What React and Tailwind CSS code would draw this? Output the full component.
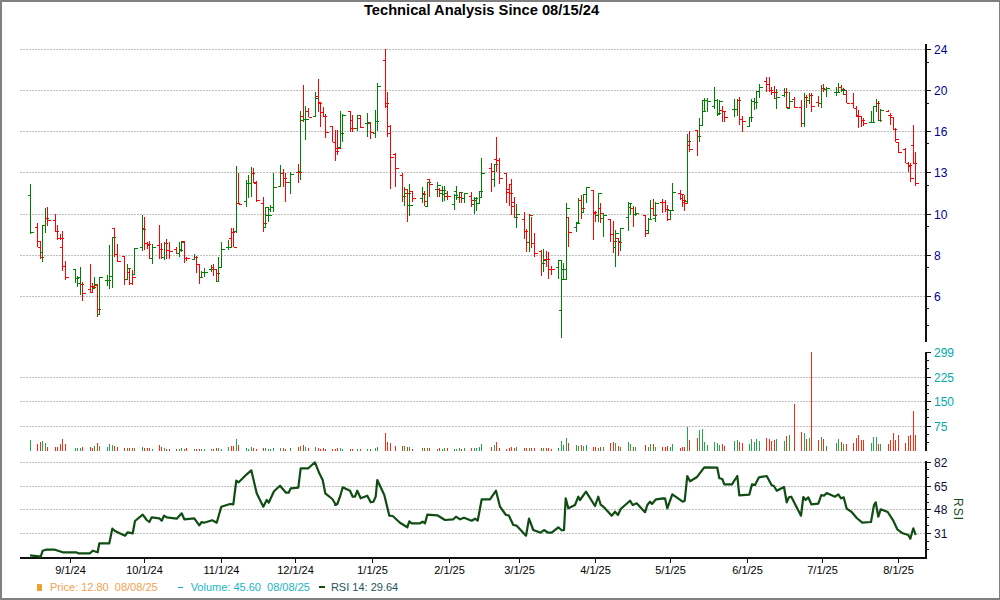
const SECTIONS = [
  { xo: 0, yo: 170, vo: 430, rows: [
    [91,43,193,75,187,'g',30],
    [113,160,230,172,230,'r',42],[121,214,268,214,262,'r',36],[128,165,275,247,165,'g',32],[136,115,190,165,145,'g',40],[143,110,167,145,150,'r',52],
    [165,133,182,150,182,'r',52],[172,165,210,182,203,'r',50],[180,193,210,203,205,'r',42],[187,182,303,230,289,'r',27],[195,272,330,289,322,'r',42],
    [225,296,340,298,324,'g',55],[232,318,352,324,340,'g',55],[240,290,375,322,342,'g',53],[247,335,392,342,370,'r',52],
    [270,281,367,358,347,'r',52],[277,338,367,365,350,'r',53],[284,320,357,355,342,'g',47],[292,342,440,345,418,'r',40],[299,322,431,431,322,'g',47],
    [322,315,348,330,330,'g',52],[329,225,357,330,318,'g',42],[337,200,354,318,202,'g',45],[344,175,260,175,252,'r',48],[351,222,275,252,274,'r',52],
    [374,258,344,258,328,'r',55],[381,283,330,328,295,'g',55],[389,295,345,307,340,'r',55],[396,300,344,340,322,'r',53],[403,233,312,312,233,'g',53],
    [426,135,242,232,178,'g',52],[433,142,240,175,218,'r',53],[441,215,238,218,222,'r',55],[448,212,268,225,265,'r',55],[456,222,282,265,230,'g',56],
    [478,166,268,226,238,'r',45],[485,220,268,238,262,'r',52],[493,215,270,262,218,'g',54],[500,207,268,218,240,'r',57],[508,215,268,240,243,'r',57],
    [530,232,252,238,248,'r',57],[537,215,260,248,240,'g',57],[545,212,245,238,215,'g',55],[552,213,278,213,265,'r',57],[560,262,272,265,265,'r',55],
    [582,253,270,268,262,'g',57],[589,258,310,262,283,'r',57],[597,283,342,283,322,'r',56],[604,303,323,322,305,'g',57],[612,295,322,307,307,'g',57],
    [634,285,305,298,298,'g',56],[641,282,318,290,298,'r',56],[649,298,332,298,310,'r',53],[656,262,332,332,290,'g',55],[664,215,290,290,238,'g',57],
    [686,210,240,230,230,'g',52],[693,175,230,205,186,'r',47],[701,175,232,187,230,'r',47],[709,-12,188,183,98,'g',28],[716,10,103,98,103,'r',45],
    [738,30,110,94,38,'g',55],[745,15,85,38,38,'g',56],[753,-8,82,38,10,'g',52],[760,-6,38,10,38,'r',54],[768,33,97,35,90,'r',56],
    [790,80,187,100,160,'r',55],[797,110,172,172,112,'g',53],[805,110,157,135,135,'g',57],[812,105,125,118,110,'g',57],[820,10,125,110,52,'g',55],
    [842,-15,52,48,8,'g',54],[850,-2,52,8,25,'r',53],[857,10,95,25,37,'r',57],[872,5,72,37,12,'g',54],
  ]},
  { xo: 0, yo: 0, vo: 430, rows: [
    [894,492,548,515,515,'r',52],[901,334,540,514,361,'g',47],[909,255,365,347,356,'r',45],[916,317,420,356,356,'g',50],[924,325,350,332,350,'r',53],
    [946,277,350,347,295,'g',52],[954,238,335,287,308,'r',55],[961,307,380,307,335,'r',56],[969,322,350,335,347,'r',55],[976,342,413,347,397,'r',57],
  ]},
  { xo: 330, yo: 40, vo: 430, rows: [
    [8,259,305,259,305,'r',56],[16,270,362,305,332,'r',56],[23,270,345,325,325,'r',54],[31,213,320,320,278,'g',55],[38,222,305,278,226,'g',57],
    [60,213,277,214,265,'r',57],[68,225,277,240,265,'r',57],[83,226,272,265,226,'g',57],[90,226,265,235,260,'r',57],
    [113,220,292,250,245,'g',57],[120,250,298,250,277,'r',57],[135,210,293,280,243,'g',55],[143,130,272,243,139,'g',50],
    [165,28,203,60,188,'r',10],[172,157,290,197,257,'r',37],[180,256,448,280,352,'r',40],[195,340,440,342,385,'r',48],
    [217,400,485,406,468,'r',48],[224,442,497,468,460,'g',48],[232,448,545,448,460,'r',50],[239,433,527,495,495,'g',52],[247,452,485,452,475,'r',57],
    [276,440,490,475,462,'g',54],[284,452,498,460,484,'r',54],[291,425,500,498,425,'g',55],[299,418,470,418,433,'r',53],
    [321,427,470,447,436,'g',56],[328,445,470,447,450,'r',55],[336,437,485,460,450,'g',57],[343,438,482,462,460,'g',55],[351,452,480,467,468,'r',53],
    [373,462,510,493,465,'g',57],[380,438,480,453,470,'g',57],[388,455,490,470,455,'g',55],[395,455,488,470,473,'r',56],[403,460,490,475,460,'g',55],
    [425,455,500,468,480,'r',55],[433,470,522,492,475,'g',54],[440,470,513,480,488,'g',55],[448,452,490,488,453,'g',52],[455,355,470,470,400,'g',42],
    [485,370,455,385,393,'r',50],[492,372,440,418,373,'g',46],[500,292,395,358,360,'r',37],[507,355,433,360,415,'r',55],
    [530,400,490,400,457,'r',58],[537,432,497,448,458,'r',54],[544,418,525,433,485,'r',52],[552,470,535,497,530,'r',54],[559,493,563,532,522,'g',52],
    [582,515,598,538,572,'r',55],[589,568,635,572,605,'r',55],[597,523,635,605,525,'g',54],[604,532,625,525,610,'r',55],[612,580,652,610,640,'r',54],
    [634,630,707,632,668,'r',55],[641,627,695,668,660,'g',54],[649,632,682,658,658,'r',54],[656,635,718,658,686,'r',55],[664,678,705,686,686,'r',57],
    [686,660,716,680,660,'g',55],[694,660,893,810,688,'g',33],[701,670,720,718,688,'g',45],[708,488,718,718,505,'g',25],[716,530,620,532,575,'r',39],
    [738,548,575,560,548,'g',45],[745,475,550,547,480,'g',47],[753,465,538,480,505,'r',44],[760,462,517,515,463,'g',47],[768,442,488,463,442,'g',44],
    [790,450,600,450,517,'r',50],[797,512,545,520,525,'r',50],[805,458,545,525,460,'g',53],[812,490,550,505,518,'r',50],[820,520,590,535,525,'g',50],
    [842,538,605,538,582,'r',40],[850,543,638,582,602,'r',36],[857,570,680,620,578,'g',38],[865,595,647,595,605,'r',47],[872,565,632,602,565,'g',52],
    [894,487,572,532,490,'g',36],[902,490,525,500,503,'g',43],[909,497,560,503,522,'r',50],[916,502,527,522,520,'g',50],
    [946,525,590,525,578,'r',45],[954,535,582,570,538,'g',50],[961,480,538,538,505,'g',43],[969,478,528,505,525,'r',43],[976,487,547,535,490,'g',50],
    [998,478,520,485,485,'r',52],[1006,480,515,485,508,'r',52],[1013,495,542,508,538,'r',48],
  ]},
  { xo: 660, yo: 40, vo: 340, rows: [
    [30,510,540,510,510,'g',322],[37,430,510,510,457,'g',312],
    [60,450,480,460,463,'r',323],[67,463,500,475,480,'r',322],[74,465,512,487,490,'r',322],[82,283,490,483,303,'g',262],[89,273,335,315,326,'r',300],
    [112,270,347,270,288,'r',294],[119,235,307,288,256,'g',270],[127,180,255,255,212,'g',267],[134,175,213,180,180,'g',307],[142,175,215,180,182,'g',315],
    [164,142,207,197,180,'g',306],[171,178,228,180,220,'g',310],[179,180,225,222,182,'g',315],[186,197,245,210,213,'r',313],[194,212,245,213,232,'r',319],
    [223,178,230,207,207,'g',303],[231,178,228,207,180,'g',300],[238,170,255,180,238,'r',305],[246,228,275,238,244,'r',309],
    [268,233,258,258,232,'g',312],[275,178,245,232,182,'g',297],[283,175,210,182,185,'g',306],[290,153,208,185,153,'g',297],[298,133,175,153,142,'g',303],
    [320,112,155,123,132,'r',294],[327,112,155,132,150,'r',297],[335,140,165,150,157,'r',302],[343,138,173,155,157,'r',300],[350,147,207,175,170,'g',297],
    [372,145,170,165,155,'g',303],[380,143,205,155,200,'r',288],[387,157,207,205,182,'g',285],[402,172,205,178,200,'r',192],
    [424,180,260,202,250,'r',277],[432,160,260,250,170,'g',280],[439,165,205,170,180,'r',297],[447,158,192,180,165,'g',295],[454,160,215,165,197,'r',36],
    [476,168,200,187,190,'r',300],[484,135,203,190,145,'g',292],[491,132,157,145,148,'r',298],[499,142,170,148,143,'g',318],
    [528,142,168,155,155,'g',309],[536,130,160,155,140,'g',297],[543,135,155,140,147,'r',306],[551,145,165,150,150,'g',311],[558,150,190,162,188,'r',312],
    [580,160,205,188,203,'r',309],[588,197,232,203,228,'r',295],[595,210,263,225,228,'r',285],[603,232,260,228,240,'r',300],[610,235,258,240,250,'r',301],
    [633,213,247,247,247,'g',309],[640,197,247,247,197,'g',291],[648,178,215,197,190,'g',291],[655,183,242,190,240,'r',312],[662,208,245,240,210,'g',312],
    [685,210,215,212,225,'r',312],[692,218,255,225,232,'r',300],[700,230,268,232,268,'r',280],[707,265,305,268,298,'r',300],[715,305,340,305,337,'r',285],
    [737,325,370,327,370,'r',309],[744,367,395,370,375,'r',288],[752,368,425,378,414,'r',286],[759,256,370,315,370,'r',213],[767,335,437,370,430,'r',285],
  ]},
];

const BARS = SECTIONS.flatMap(({ xo, yo, vo, rows }) =>
  rows.map(([x, h, l, o, c, col, v]) => ({
    x: Math.floor(xo + x / 3) + 0.5,
    h: yo + h / 3,
    l: yo + l / 3,
    o: Math.round(yo + o / 3) + 0.5,
    c: Math.round(yo + c / 3) + 0.5,
    col,
    v: vo + v / 3,
  }))
);

const rsi5 = [[90,376],[122,380],[128,362],[138,359],[165,359],[188,367],[228,367],[235,370],[270,370],[278,362],[293,367],[298,340],[328,340],[337,296],[345,303],[375,317],[383,307],[398,310],[405,273],[428,254],[440,270],[448,276],[455,262],[478,265],[485,272],[492,257],[500,262],[530,266],[545,250],[553,268],[583,265],[598,286],[605,276],[612,278],[637,271],[650,278],[664,230],[690,222],[700,223],[709,152],[716,157],[740,133],[754,121],[770,190],[790,230],[800,210],[806,218],[822,184],[840,167],[858,188],[866,188],[872,175],[895,173],[902,115],[925,115],[945,97],[958,130],[968,150],[976,190],[997,207],[1008,225]];
const rsi6 = [[15,225],[22,222],[30,200],[38,172],[60,182],[68,200],[75,200],[82,182],[92,205],[112,197],[122,217],[130,215],[137,200],[142,150],[163,195],[178,257],[188,258],[210,278],[232,292],[238,274],[245,280],[270,280],[278,275],[285,280],[292,254],[322,256],[345,270],[370,268],[378,260],[390,268],[402,263],[425,272],[435,266],[443,272],[455,208],[480,208],[498,182],[510,230],[528,255],[536,256],[550,285],[560,287],[588,317],[597,266],[610,300],[632,308],[642,300],[655,308],[665,308],[685,292],[695,301],[702,300],[707,205],[715,235],[735,225],[745,200],[750,210],[768,185],[795,228],[805,200],[812,224],[822,232],[845,257],[855,245],[864,255],[872,237],[900,212],[908,225],[920,220],[945,247],[952,225],[960,215],[966,222],[978,208],[1000,205]];
const rsi7 = [[0,477],[15,475],[22,505],[37,463],[68,485],[74,482],[82,408],[90,424],[110,412],[133,382],[172,383],[178,415],[187,417],[193,433],[216,433],[232,408],[238,466],[268,464],[276,433],[285,435],[297,412],[320,408],[335,436],[342,438],[350,452],[372,441],[380,487],[387,472],[394,470],[423,527],[430,471],[437,480],[445,472],[454,493],[475,491],[484,465],[492,467],[500,459],[525,470],[535,463],[543,475],[551,472],[560,506],[575,516],[590,534],[607,548],[633,546],[642,495],[647,487],[655,530],[662,508],[683,516],[700,542],[712,568],[728,580],[745,585],[751,596],[760,565],[767,585]];
const rsiPoints = [
  ...rsi5.map(([x, y]) => [x / 3, 430 + y / 3]),
  ...rsi6.map(([x, y]) => [330 + x / 3, 430 + y / 3]),
  ...rsi7.map(([x, y]) => [660 + x / 3, 340 + y / 3]),
].map(([x, y]) => `${x.toFixed(1)},${y.toFixed(1)}`).join(' ');

const GRID = [49, 90, 131, 172, 214, 255, 296, 377, 401, 426, 462, 486, 509, 533];
const PRICE = [[24, 49], [20, 90], [16, 131], [13, 172], [10, 214], [8, 255], [6, 296]];
const VOL = [[299, 352], [225, 377], [150, 401], [75, 426]];
const RSI = [[82, 462], [65, 486], [48, 509], [31, 533]];
const MINOR = [62, 103, 143, 185, 226, 267, 308, 325, 360, 368, 385, 393, 409, 417, 434, 442, 469, 477, 494, 502, 517, 525, 541, 549];
const DATES = [['9/1/24', 70], ['10/1/24', 144], ['11/1/24', 221], ['12/1/24', 295], ['1/1/25', 372], ['2/1/25', 449], ['3/1/25', 519], ['4/1/25', 595], ['5/1/25', 670], ['6/1/25', 747], ['7/1/25', 822], ['8/1/25', 898]];

function Chart() {
  return (
    <svg viewBox="2 22 996 554" width="996" height="554" className="block shrink-0">
      <g shapeRendering="crispEdges">
        {GRID.map((y) => (
          <line key={y} x1="20" x2="925" y1={y + 0.5} y2={y + 0.5} stroke="#bebebe" strokeDasharray="2 1" />
        ))}
        {BARS.map((b, i) => {
          const s = b.col === 'r' ? '#ff0000' : '#008000';
          return (
            <g key={i} stroke={s}>
              <line x1={b.x} x2={b.x} y1={b.h} y2={b.l} />
              <line x1={b.x - 2.5} x2={b.x} y1={b.o} y2={b.o} />
              <line x1={b.x} x2={b.x + 3.5} y1={b.c} y2={b.c} />
            </g>
          );
        })}
        {BARS.map((b, i) => (
          <line key={i} x1={b.x} x2={b.x} y1={b.v} y2="451" stroke={b.col === 'r' ? '#ff2a10' : '#22a84a'} />
        ))}
        <g fill="#111">
          <rect x="925" y="44" width="2" height="298" />
          <rect x="925" y="352" width="2" height="99" />
          <rect x="925" y="461" width="2" height="98" />
          <rect x="20" y="557" width="907" height="2" />
        </g>
        <g stroke="#111">
          {[...PRICE, ...VOL, ...RSI].map(([, y]) => (
            <line key={y} x1="927" x2="931" y1={y + 0.5} y2={y + 0.5} />
          ))}
          {MINOR.map((y) => (
            <line key={y} x1="927" x2="929" y1={y + 0.5} y2={y + 0.5} />
          ))}
          {DATES.map(([, x]) => (
            <line key={x} x1={x + 0.5} x2={x + 0.5} y1="559" y2="563" />
          ))}
        </g>
      </g>
      <polyline points={rsiPoints} fill="none" stroke="#0f4d12" strokeWidth="2.2" strokeLinejoin="round" />
      <g className="text-xs">
        {PRICE.map(([t, y]) => (
          <text key={t} x="934" y={y + 4.5} fill="#000090">{t}</text>
        ))}
        {VOL.map(([t, y]) => (
          <text key={t} x="934" y={y + 4.5} fill="#00aaaa">{t}</text>
        ))}
        {RSI.map(([t, y]) => (
          <text key={t} x="934" y={y + 4.5} fill="#10103a">{t}</text>
        ))}
        <text x="954" y="498" fill="#135013" transform="rotate(90 954 498)" letterSpacing="1">RSI</text>
      </g>
      <g className="text-[11px]">
        {DATES.map(([t, x]) => (
          <text key={t} x={x + 0.5} y="574" textAnchor="middle" fill="#000">{t}</text>
        ))}
      </g>
    </svg>
  );
}

export default function App() {
  return (
    <div className="w-[1000px] h-[600px] overflow-hidden border-2 border-r border-[#808080] bg-white flex flex-col font-['Liberation_Sans',sans-serif]">
      <div className="h-5 pr-[38px] text-center text-[14.7px] leading-4 font-bold text-black">
        Technical Analysis Since 08/15/24
      </div>
      <Chart />
      <div className="flex items-center h-[22px] text-[11px] leading-none pl-[35px]">
        <span className="w-[5px] h-[7px] bg-[#f0a030]" />
        <span className="ml-2 text-[#f4a050] whitespace-pre">Price: 12.80  08/08/25</span>
        <span className="ml-5 w-[5px] h-px bg-[#00b0c0]" />
        <span className="ml-2 text-[#20b4c4] whitespace-pre">Volume: 45.60  08/08/25</span>
        <span className="ml-[9px] w-[6px] h-[2px] bg-[#0f4d12]" />
        <span className="ml-[6px] text-[#1d5560] whitespace-pre">RSI 14: 29.64</span>
      </div>
    </div>
  );
}
